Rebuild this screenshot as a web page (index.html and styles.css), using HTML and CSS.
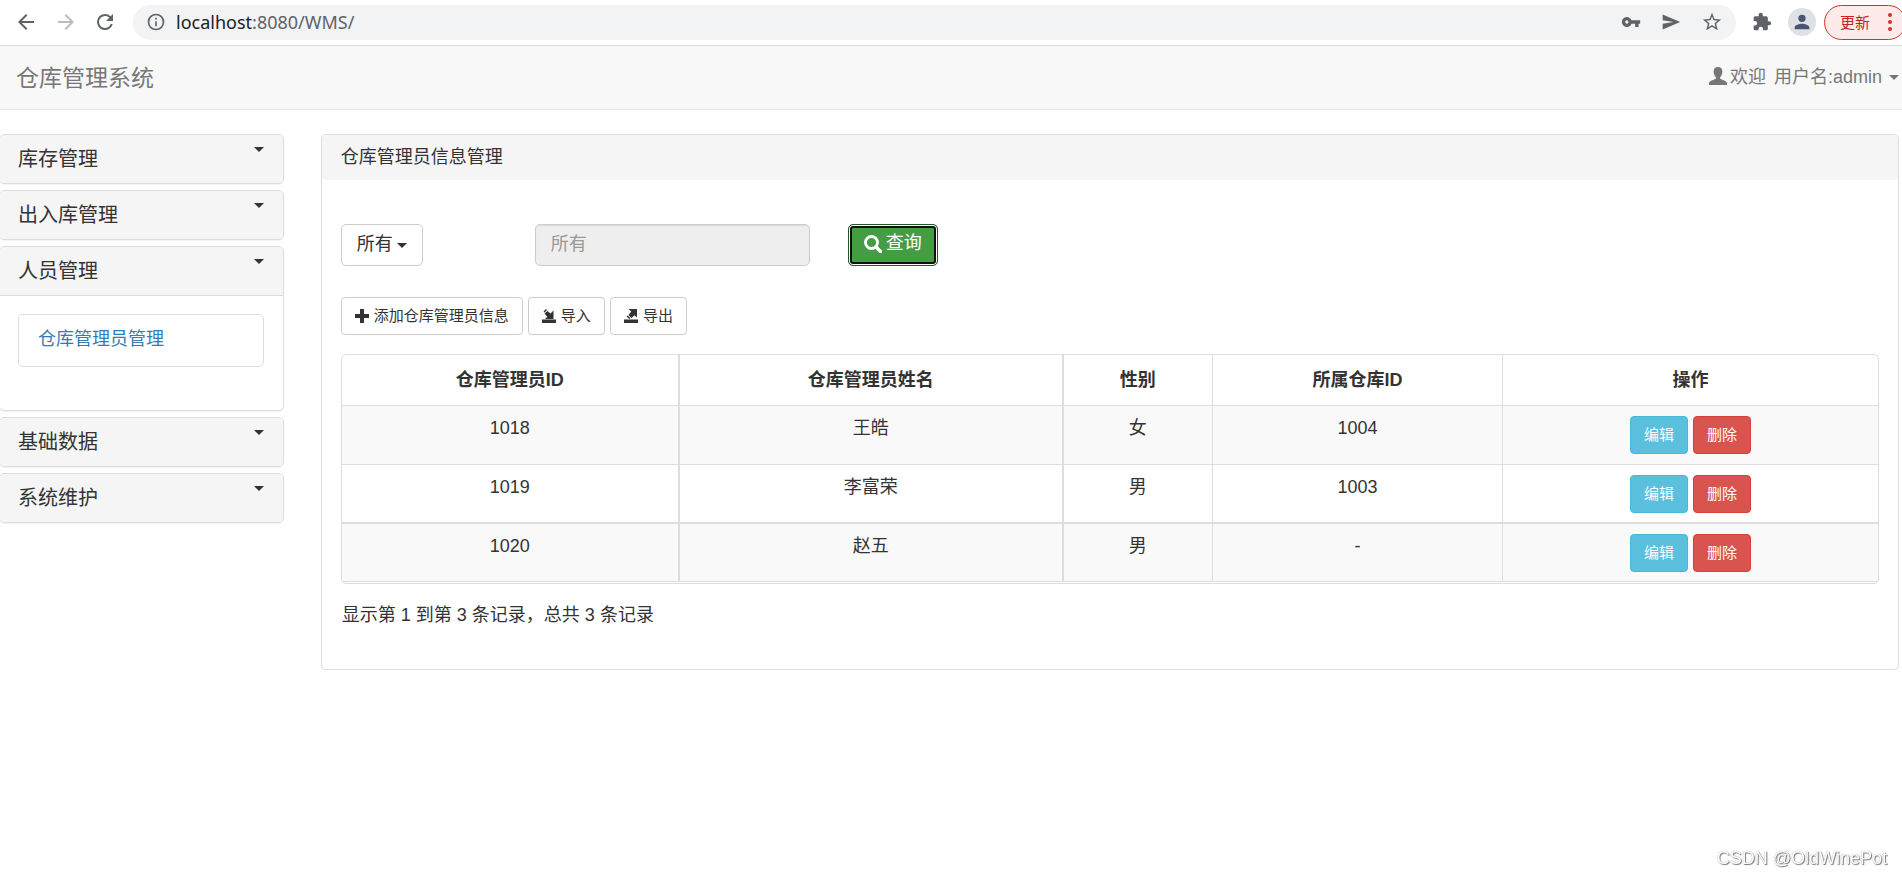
FILE: index.html
```html
<!DOCTYPE html>
<html lang="zh-CN">
<head>
<meta charset="utf-8">
<title>仓库管理系统</title>
<link rel="stylesheet" href="styles.css">
</head>
<body>
<div class="toolbar">
  <button class="tool back" aria-label="后退"><svg viewBox="0 0 24 24"><path d="M20 11H7.8l5.6-5.6L12 4l-8 8 8 8 1.4-1.4L7.8 13H20z"/></svg></button>
  <button class="tool forward" aria-label="前进"><svg viewBox="0 0 24 24"><path d="M12 4l-1.4 1.4 5.6 5.6H4v2h12.2l-5.6 5.6L12 20l8-8z"/></svg></button>
  <button class="tool reload" aria-label="刷新"><svg viewBox="0 0 24 24"><path d="M17.65 6.35A7.96 7.96 0 0 0 12 4a8 8 0 1 0 7.73 10h-2.08A6 6 0 1 1 12 6c1.66 0 3.14.69 4.22 1.78L13 11h7V4z"/></svg></button>
  <div class="address">
    <svg class="info" viewBox="0 0 24 24"><path d="M11 7h2v2h-2zm0 4h2v6h-2zm1-9a10 10 0 1 0 0 20 10 10 0 0 0 0-20zm0 18a8 8 0 1 1 0-16 8 8 0 0 1 0 16z"/></svg>
    <div class="url" role="textbox" aria-label="地址"><span class="host">localhost</span>:8080/WMS/</div>
    <button class="tool" aria-label="密码"><svg viewBox="0 0 24 24"><path d="M12.65 10a6 6 0 1 0 0 4H17v4h4v-4h2v-4zM7 14a2 2 0 1 1 0-4 2 2 0 0 1 0 4z"/></svg></button>
    <button class="tool" aria-label="发送"><svg viewBox="0 0 24 24"><path d="M2 3v7l13 2-13 2v7l21-9z"/></svg></button>
    <button class="tool star" aria-label="收藏"><svg viewBox="0 0 24 24"><path d="M22 9.24l-7.19-.62L12 2 9.19 8.63 2 9.24l5.46 4.73L5.82 21 12 17.27 18.18 21l-1.63-7.03zM12 15.4l-3.76 2.27 1-4.28-3.32-2.88 4.38-.38L12 6.1l1.71 4.04 4.38.38-3.32 2.88 1 4.28z"/></svg></button>
  </div>
  <button class="tool puzzle" aria-label="扩展程序"><svg viewBox="0 0 24 24"><path d="M20.5 11H19V7a2 2 0 0 0-2-2h-4V3.500a2.500 2.500 0 0 0-5 0V5H4a2 2 0 0 0-2 2v3.800h1.500a2.700 2.700 0 0 1 0 5.400H2V20c0 1.100.9 2 2 2h3.800v-1.500a2.700 2.700 0 0 1 5.400 0V22H17a2 2 0 0 0 2-2v-4h1.500a2.500 2.500 0 0 0 0-5z"/></svg></button>
  <button class="avatar" aria-label="个人资料"><svg viewBox="0 0 24 24"><path d="M12 12a4 4 0 1 0 0-8 4 4 0 0 0 0 8zm0 2c-2.670 0-8 1.340-8 4v2h16v-2c0-2.660-5.330-4-8-4z"/></svg></button>
  <button class="update">更新<svg viewBox="0 0 4 18"><circle cx="2" cy="2" r="2"/><circle cx="2" cy="9" r="2"/><circle cx="2" cy="16" r="2"/></svg></button>
</div>

<header class="navbar">
  <a class="brand" href="#">仓库管理系统</a>
  <button class="user"><svg viewBox="0 0 18 18"><path d="M9 0C6 0 4.600 1.800 4.600 4.600c0 2.400 1 4.600 2.300 5.600v1.300C6.500 12.700 0 13.500 0 16v2h18v-2c0-2.500-6.500-3.300-6.900-4.500v-1.300c1.300-1 2.300-3.200 2.300-5.600C13.400 1.800 12 0 9 0z"/></svg><span>欢迎</span><span class="name">用户名:admin</span><i class="caret"></i></button>
</header>

<div class="content">
  <nav class="sidebar">
    <section class="group"><button class="group-title">库存管理<i class="caret"></i></button></section>
    <section class="group"><button class="group-title">出入库管理<i class="caret"></i></button></section>
    <section class="group open">
      <button class="group-title" aria-expanded="true">人员管理<i class="caret"></i></button>
      <div class="group-body"><a class="entry" href="#">仓库管理员管理</a></div>
    </section>
    <section class="group"><button class="group-title">基础数据<i class="caret"></i></button></section>
    <section class="group"><button class="group-title">系统维护<i class="caret"></i></button></section>
  </nav>

  <main class="panel">
    <div class="panel-heading">仓库管理员信息管理</div>
    <div class="panel-body">
      <form class="search">
        <label class="picker"><select aria-label="查询方式"><option>所有</option></select><i class="caret"></i></label>
        <input class="keyword" type="text" placeholder="所有" aria-label="查询内容" disabled>
        <button class="query" type="button"><svg viewBox="0 0 18 18"><circle cx="7.500" cy="7.500" r="6" fill="none" stroke="currentColor" stroke-width="2.800"/><path d="M12 12l4.500 4.500" stroke="currentColor" stroke-width="3.400" stroke-linecap="round"/></svg>查询</button>
      </form>
      <div class="actions">
        <button class="btn"><svg viewBox="0 0 14 14"><path d="M5 0h4v5h5v4H9v5H5V9H0V5h5z"/></svg>添加仓库管理员信息</button>
        <button class="btn"><svg viewBox="0 0 14 14"><path d="M0 10.500h14V14H0zM11.500 1.500V10H3l2.300-2.300L2.500 4.500 5.500 2l3 2.500zM1.500 2.500L4 0l1 1-2.500 2.500z"/></svg>导入</button>
        <button class="btn"><svg viewBox="0 0 14 14"><path d="M0 10.500h14V14H0zM4.500 0H13v8.500l-2.500-2.300L7.500 9 4.500 6l2.800-3.500zM2.500 7.500l1-1L6.500 9l-1 1z"/></svg>导出</button>
      </div>
      <div class="table-frame">
        <table>
          <colgroup><col class="c-id"><col class="c-name"><col class="c-sex"><col class="c-store"><col></colgroup>
          <thead><tr><th>仓库管理员ID</th><th>仓库管理员姓名</th><th>性别</th><th>所属仓库ID</th><th>操作</th></tr></thead>
          <tbody>
            <tr><td>1018</td><td>王皓</td><td>女</td><td>1004</td><td><div class="ops"><button class="btn edit">编辑</button><button class="btn delete">删除</button></div></td></tr>
            <tr><td>1019</td><td>李富荣</td><td>男</td><td>1003</td><td><div class="ops"><button class="btn edit">编辑</button><button class="btn delete">删除</button></div></td></tr>
            <tr><td>1020</td><td>赵五</td><td>男</td><td>-</td><td><div class="ops"><button class="btn edit">编辑</button><button class="btn delete">删除</button></div></td></tr>
          </tbody>
        </table>
      </div>
      <p class="summary">显示第 1 到第 3 条记录，总共 3 条记录</p>
    </div>
  </main>
</div>
<div class="watermark">CSDN @OldWinePot</div>
</body>
</html>
```

FILE: styles.css
```css
* { box-sizing: border-box; }
body {
  margin: 0;
  background: #fff;
  color: #333;
  font: 400 18px/25px "Liberation Sans", "Noto Sans CJK SC", sans-serif;
}
button, input, select { font: inherit; color: inherit; margin: 0; }
button { padding: 0; border: 0; background: none; cursor: pointer; }
a { text-decoration: none; }
svg { display: block; flex: none; fill: currentColor; }
.caret {
  flex: none;
  width: 0;
  border: 5px solid transparent;
  border-top-color: currentColor;
  border-bottom: 0;
}

/* Browser toolbar */
.toolbar {
  display: flex;
  align-items: center;
  height: 46px;
  padding: 0 0 1px 14px;
  border-bottom: 1px solid #dadce0;
  overflow: hidden;
  color: #5f6368;
}
.tool svg { width: 20px; height: 20px; }
.back svg, .forward svg, .reload svg { width: 24px; height: 24px; }
.forward { margin-left: 16px; color: #babcbe; }
.reload { margin-left: 15px; }
.address {
  flex: 1;
  display: flex;
  align-items: center;
  gap: 20px;
  height: 35px;
  margin-left: 16px;
  padding: 0 13px;
  border-radius: 18px;
  background: #f1f3f4;
}
.info { width: 20px; height: 20px; }
.url {
  flex: 1;
  margin-left: -10px;
  font: 400 18px/26px "Noto Sans", sans-serif;
}
.host { color: #202124; }
.star svg { width: 22px; height: 22px; }
.puzzle { margin-left: 16px; }
.avatar {
  width: 28px;
  height: 28px;
  margin: 0 8px 0 16px;
  padding: 3px;
  border-radius: 50%;
  background: #dee1e6;
  color: #4a5670;
}
.avatar svg { width: 22px; height: 22px; }
.update {
  display: flex;
  align-items: center;
  gap: 18px;
  height: 35px;
  margin-right: -4px;
  padding: 0 13px 0 15px;
  border: 1px solid #d93025;
  border-radius: 18px;
  background: #fcebea;
  color: #c5221f;
  font-size: 15px;
}
.update svg { width: 4px; height: 18px; color: #d93025; }

/* Page header */
.navbar {
  display: flex;
  align-items: center;
  justify-content: space-between;
  height: 64px;
  padding: 0 3px 0 16px;
  border-bottom: 1px solid #e7e7e7;
  background: #f8f8f8;
  color: #777;
}
.brand { color: inherit; font-size: 23px; line-height: 30px; }
.user { display: flex; align-items: center; }
.user svg { width: 18px; height: 18px; margin: 0 3px 3px 0; }
.name { margin: 0 7px 0 8px; }

.content {
  display: grid;
  grid-template-columns: 15% 1fr;
  gap: 36px;
  align-items: start;
  padding: 24px 3px 0 0;
}

/* Sidebar */
.sidebar { display: grid; gap: 6px; margin: 0 1px 0 -1px; }
.group {
  border: 1px solid #ddd;
  border-radius: 5px;
  box-shadow: 0 1px 1px rgba(0, 0, 0, 0.05);
  overflow: hidden;
}
.group-title {
  display: flex;
  align-items: flex-start;
  justify-content: space-between;
  width: 100%;
  padding: 12px 19px 12px 18px;
  background: #f5f5f5;
  font-size: 20px;
  line-height: 24px;
}
.group-body {
  padding: 18px 19px 43px 18px;
  border-top: 1px solid #ddd;
}
.entry {
  display: block;
  padding: 12px 19px 14px;
  border: 1px solid #ddd;
  border-radius: 5px;
  color: #337ab7;
}

/* Main panel */
.panel {
  border: 1px solid #ddd;
  border-radius: 5px;
  box-shadow: 0 1px 1px rgba(0, 0, 0, 0.05);
}
.panel-heading {
  padding: 10px 19px;
  border-radius: 4px;
  background: #f5f5f5;
}
.panel-body { padding: 44px 19px 41px; }
.search { display: flex; align-items: stretch; height: 42px; }
.picker { position: relative; width: 82px; margin-right: 112px; }
.picker select {
  width: 100%;
  height: 100%;
  padding: 0 15px 2px;
  border: 1px solid #ccc;
  border-radius: 5px;
  background: #fff;
  appearance: none;
}
.picker .caret { position: absolute; right: 16px; top: 19px; pointer-events: none; }
.keyword {
  width: 275px;
  margin-right: 38px;
  padding: 0 15px 2px;
  border: 1px solid #ccc;
  border-radius: 5px;
  background: #eee;
  box-shadow: inset 0 1px 1px rgba(0, 0, 0, 0.08);
}
.keyword::placeholder { color: #999; opacity: 1; }
.query {
  display: flex;
  align-items: center;
  gap: 4px;
  padding: 0 15px 3px;
  border: 1px solid #255625;
  border-radius: 5px;
  background: #449d44;
  box-shadow: inset 0 0 0 1px #fff, inset 0 0 0 3px #101010;
  color: #fff;
}
.query svg { width: 18px; height: 18px; }
.actions { display: flex; gap: 5px; margin: 31px 0 19px; }
.btn {
  display: flex;
  align-items: center;
  gap: 5px;
  height: 38px;
  padding: 0 13px 1px;
  border: 1px solid #ccc;
  border-radius: 4px;
  background: #fff;
  font-size: 15px;
  line-height: 22px;
}
.btn svg { width: 14px; height: 14px; }

.table-frame {
  padding-bottom: 1px;
  border: 1px solid #ddd;
  border-radius: 5px;
  overflow: hidden;
}
table {
  width: 100%;
  border-spacing: 0;
  table-layout: fixed;
  text-align: center;
}
.c-id { width: 22%; }
.c-name { width: 25%; }
.c-sex { width: 9.7%; }
.c-store { width: 18.9%; }
th, td {
  padding: 10px 10px 9px;
  border: 0 solid #ddd;
  border-width: 0 1px 1px 0;
  vertical-align: top;
}
th { height: 51px; padding: 10px; vertical-align: middle; font-weight: 700; }
th:nth-child(-n+2), td:nth-child(-n+2) { border-right-width: 2px; }
th:last-child, td:last-child { border-right-width: 0; }
tbody tr:nth-child(odd) { background: #f9f9f9; }
tbody tr:first-child td { padding-bottom: 10px; }
tbody tr:nth-child(2) td { border-bottom-width: 2px; }
.ops { display: flex; justify-content: center; gap: 5px; }
.ops .edit { border-color: #46b8da; background: #5bc0de; color: #fff; }
.ops .delete { border-color: #d43f3a; background: #d9534f; color: #fff; }
.summary { margin: 19px 0 0; padding: 0 1px; }

.watermark {
  position: fixed;
  right: 15px;
  bottom: 5px;
  color: #fff;
  font-size: 18px;
  line-height: 24px;
  text-shadow: 1px 1px 1px #777, 0 0 1px #888;
}
```
